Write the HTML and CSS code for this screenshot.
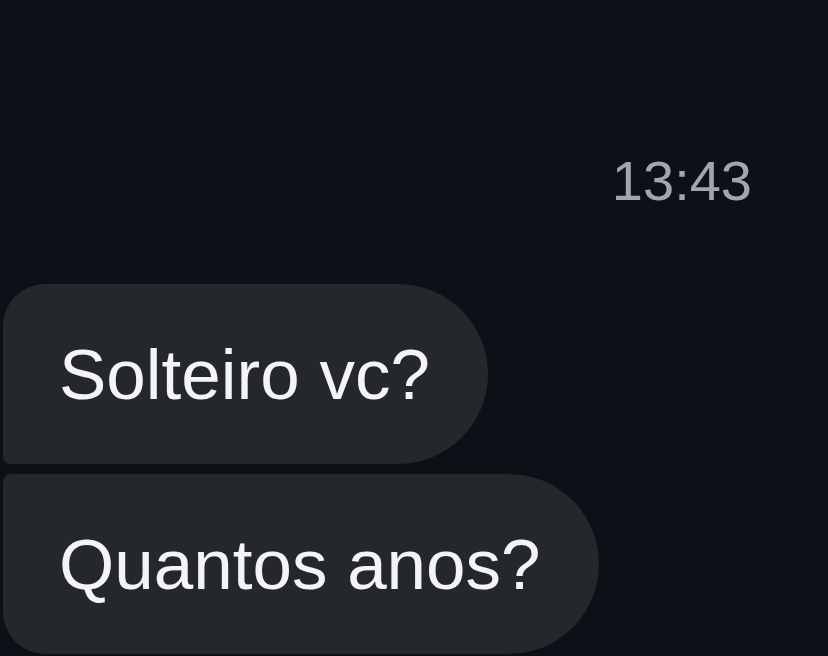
FILE: index.html
```html
<!DOCTYPE html>
<html lang="pt">
<head>
    <meta charset="UTF-8">
    <meta name="viewport" content="width=device-width, initial-scale=1.0">
    <title>Chat</title>
    <link rel="stylesheet" href="styles.css">
</head>
<body>
    <div class="chat">
        <div class="time">13:43</div>
        <div class="messages">
            <div class="bubble first">Solteiro vc?</div>
            <div class="bubble last">Quantos anos?</div>
        </div>
    </div>
</body>
</html>
```

FILE: styles.css
```css
body {
    font-family: "Liberation Sans", Arial, sans-serif;
    margin: 0;
    padding: 0;
    background-color: #0d1016;
    color: #f4f4f4;
}

.chat {
    display: flex;
    flex-direction: column;
    padding-top: 154px;
}

.time {
    font-size: 56px;
    line-height: 54px;
    color: #a1a5ac;
    text-align: right;
    padding-right: 76px;
    margin-bottom: 76px;
}

.messages {
    display: flex;
    flex-direction: column;
    align-items: flex-start;
    gap: 10px;
    padding-left: 3px;
}

.bubble {
    display: flex;
    align-items: center;
    height: 180px;
    box-sizing: border-box;
    padding: 0 58px 0 56px;
    font-size: 71px;
    background-color: #24272c;
    border-radius: 90px;
}

.first {
    border-top-left-radius: 42px;
    border-bottom-left-radius: 8px;
}

.last {
    border-top-left-radius: 8px;
    border-bottom-left-radius: 42px;
}
```
